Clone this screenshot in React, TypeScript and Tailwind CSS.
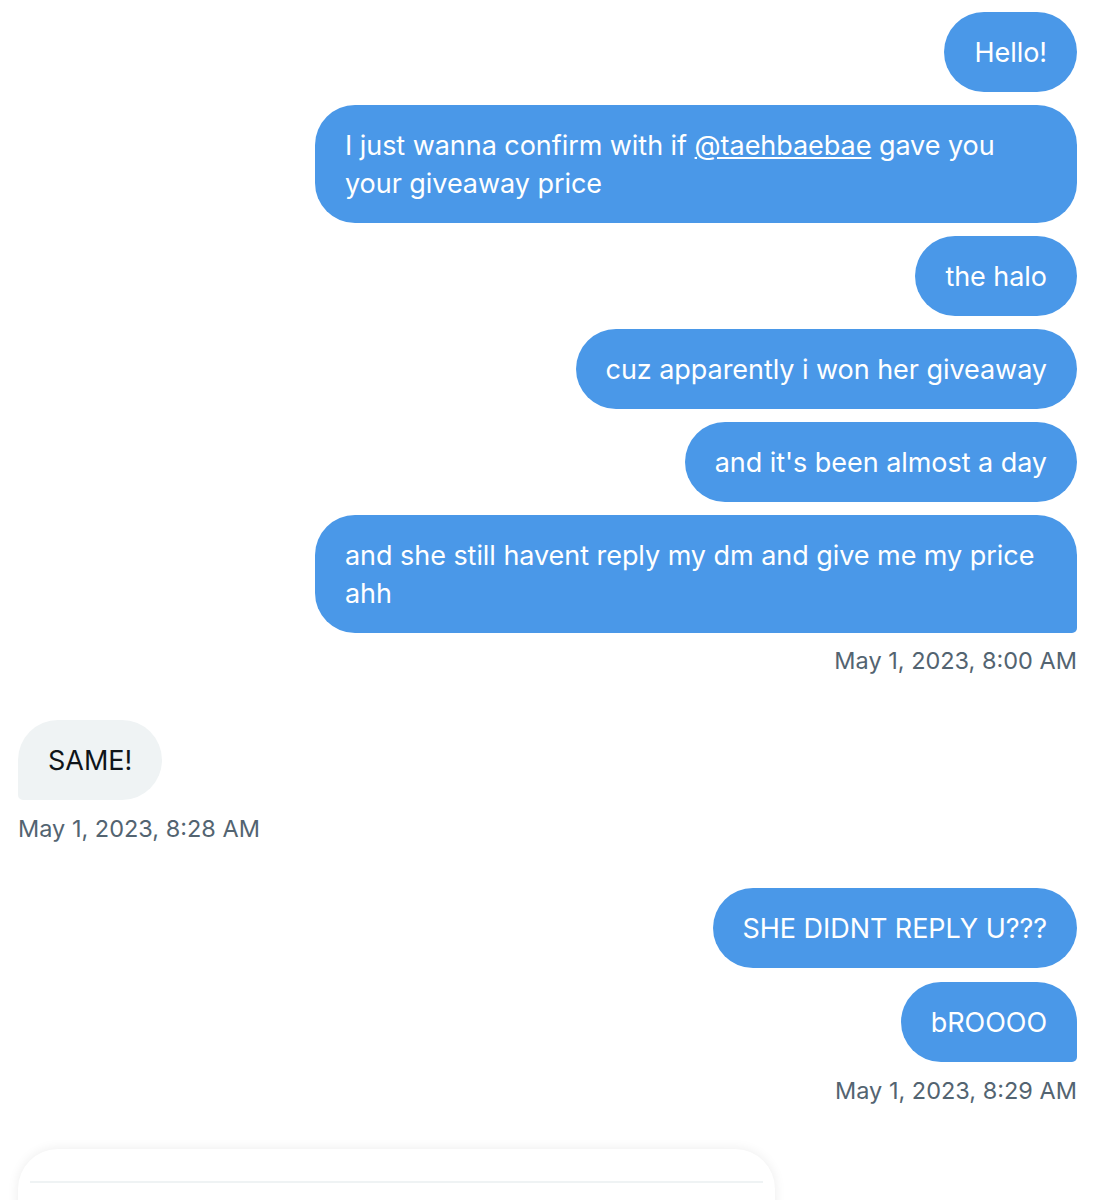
import React from "react";

const font = { fontFamily: 'Inter, "Liberation Sans", Arial, sans-serif' };

function Sent({ children, last }: { children: React.ReactNode; last?: boolean }) {
  return (
    <div className="flex justify-end">
      <div
        className={`max-w-[762px] bg-[#4a98e8] text-white px-[30px] pt-[22px] pb-[20px] text-[27px] leading-[38px] tracking-[-0.05px] ${
          last ? "rounded-[40px] rounded-br-[5px]" : "rounded-[40px]"
        }`}
      >
        {children}
      </div>
    </div>
  );
}

export default function App() {
  return (
    <div className="bg-white w-[1095px] h-[1200px] overflow-hidden px-[18px] pt-[12px]" style={font}>
      <div className="flex flex-col gap-[13px]">
        <Sent>Hello!</Sent>
        <Sent>
          I just wanna confirm with if <span className="underline">@taehbaebae</span> gave you your giveaway price
        </Sent>
        <Sent>the halo</Sent>
        <Sent>cuz apparently i won her giveaway</Sent>
        <Sent>and it's been almost a day</Sent>
        <Sent last>and she still havent reply my dm and give me my price ahh</Sent>
      </div>
      <div className="mt-[12px] text-right text-[23.5px] leading-[32px] text-[#536471]">May 1, 2023, 8:00 AM</div>

      <div className="mt-[43px] flex">
        <div className="bg-[#eff3f4] text-[#0f1419] px-[30px] pt-[22px] pb-[20px] text-[27px] leading-[38px] rounded-[40px] rounded-bl-[5px]">
          SAME!
        </div>
      </div>
      <div className="mt-[13px] text-left text-[23.5px] leading-[32px] text-[#536471]">May 1, 2023, 8:28 AM</div>

      <div className="mt-[43px] flex flex-col gap-[14px]">
        <Sent>SHE DIDNT REPLY U???</Sent>
        <Sent last>bROOOO</Sent>
      </div>
      <div className="mt-[13px] text-right text-[23.5px] leading-[32px] text-[#536471]">May 1, 2023, 8:29 AM</div>

      <div className="mt-[42px] w-[757px] h-[200px] rounded-[40px] bg-white shadow-[0_0_12px_rgba(0,0,0,0.08)] pt-[32px] px-[12px]">
        <div className="h-[2px] bg-[#eff3f4]" />
      </div>
    </div>
  );
}
